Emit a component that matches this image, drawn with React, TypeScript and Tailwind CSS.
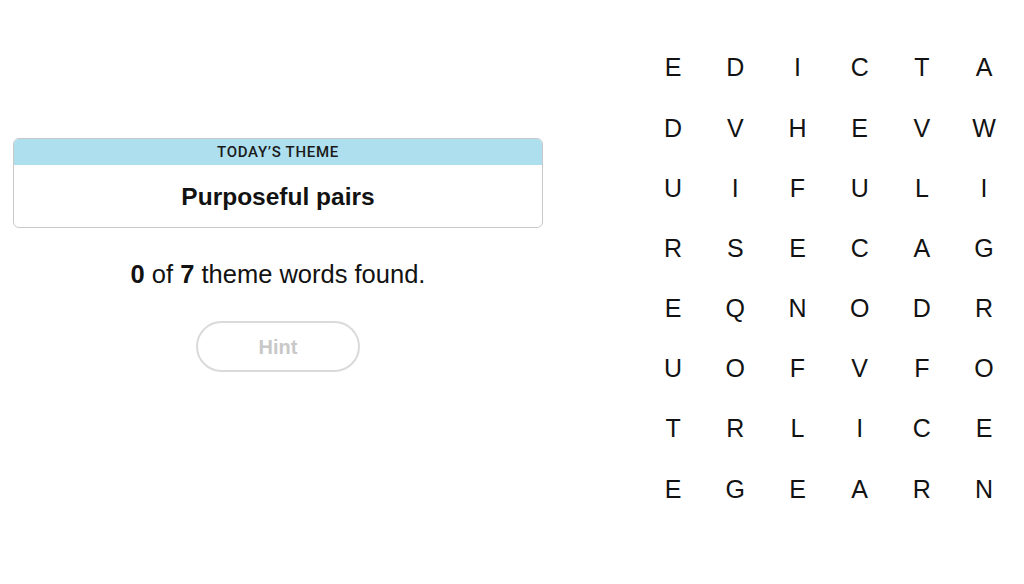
import React from "react";

const rows = [
  "EDICTA",
  "DVHEVW",
  "UIFULI",
  "RSECAG",
  "EQNODR",
  "UOFVFO",
  "TRLICE",
  "EGEARN",
];

export default function App() {
  return (
    <div
      className="w-[1024px] h-[584px] bg-white flex text-[#121212]"
      style={{ fontFamily: '"Liberation Sans", Arial, sans-serif' }}
    >
      <div className="w-[543px] pl-[13px] pt-[138px] flex flex-col items-center">
        <div className="w-[530px] h-[90px] rounded-[6px] border border-[#c8c8c8] overflow-hidden flex flex-col">
          <div className="h-[26px] bg-[#aedfee] flex items-center justify-center text-[15px] font-medium tracking-[0.7px] text-[#1a1a1a] leading-none" style={{ fontFamily: 'Roboto, "Liberation Sans", sans-serif' }}>
            TODAY’S THEME
          </div>
          <div className="flex-1 flex items-center justify-center text-[24.5px] font-bold leading-none pt-[2px]">
            Purposeful pairs
          </div>
        </div>
        <div className="mt-[31px] text-[25.5px] leading-[30px]">
          <span className="font-bold">0</span> of <span className="font-bold">7</span> theme words found.
        </div>
        <button className="mt-[32px] w-[164px] h-[51px] rounded-full border-2 border-[#dadada] text-[20px] font-bold text-[#c8c8c8] flex items-center justify-center">
          Hint
        </button>
      </div>
      <div className="ml-[99px] pt-[38px] flex flex-col">
        {rows.map((r, i) => (
          <div key={i} className="flex h-[60.2px]">
            {r.split("").map((c, j) => (
              <div
                key={j}
                className="w-[62.2px] flex items-center justify-center text-[25px] text-[#121212]"
              >
                {c}
              </div>
            ))}
          </div>
        ))}
      </div>
    </div>
  );
}
